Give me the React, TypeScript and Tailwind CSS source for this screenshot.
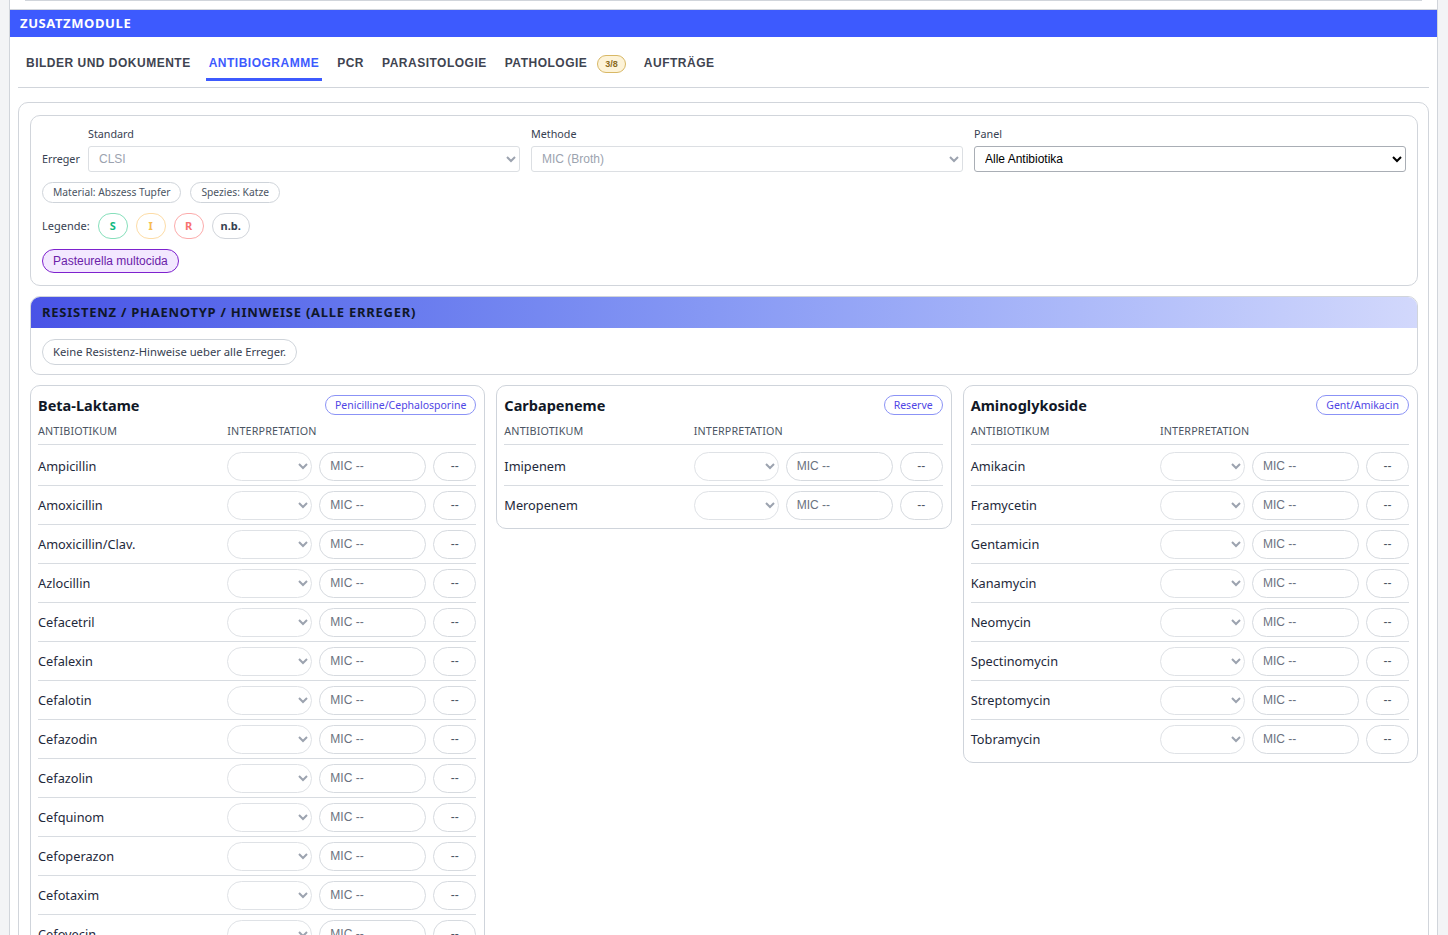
/**
 * Zusatzmodule — Antibiogramme tab.
 *
 *   - Erreger settings (Standard / Methode / Panel), chips and legend
 *   - Resistenz hint panel
 *   - Three antibiotic group cards with interpretation / MIC inputs
 */

import React from "react";

// ── Data ──────────────────────────────────────────────────────────────────────

const TABS: { label: string; active?: boolean; badge?: string }[] = [
  { label: "BILDER UND DOKUMENTE" },
  { label: "ANTIBIOGRAMME", active: true },
  { label: "PCR" },
  { label: "PARASITOLOGIE" },
  { label: "PATHOLOGIE", badge: "3/8" },
  { label: "AUFTRÄGE" },
];

const GROUPS: { title: string; tag: string; items: string[] }[] = [
  {
    title: "Beta-Laktame",
    tag: "Penicilline/Cephalosporine",
    items: [
      "Ampicillin",
      "Amoxicillin",
      "Amoxicillin/Clav.",
      "Azlocillin",
      "Cefacetril",
      "Cefalexin",
      "Cefalotin",
      "Cefazodin",
      "Cefazolin",
      "Cefquinom",
      "Cefoperazon",
      "Cefotaxim",
      "Cefovecin",
      "Cefpodoxim",
      "Ceftiofur",
      "Oxacillin",
      "Penicillin G",
    ],
  },
  { title: "Carbapeneme", tag: "Reserve", items: ["Imipenem", "Meropenem"] },
  {
    title: "Aminoglykoside",
    tag: "Gent/Amikacin",
    items: [
      "Amikacin",
      "Framycetin",
      "Gentamicin",
      "Kanamycin",
      "Neomycin",
      "Spectinomycin",
      "Streptomycin",
      "Tobramycin",
    ],
  },
];

const LEGEND = [
  { label: "S", cls: "w-[30px] border-[#86dfbb] text-[#10b981]" },
  { label: "I", cls: "w-[30px] border-[#fddca6] text-[#f6bd52]" },
  { label: "R", cls: "w-[30px] border-[#fcabab] text-[#f87171]" },
  { label: "n.b.", cls: "w-[38px] border-[#d1d5db] text-[#374151]" },
];

// ── Pieces ────────────────────────────────────────────────────────────────────

function AntibioticRow({ name, last }: { name: string; last: boolean }) {
  return (
    <div
      className={
        last
          ? "flex items-center h-[38px]"
          : "flex items-center h-[39px] border-b border-[#d8dce1]"
      }
    >
      <span className="flex-1 text-[12.75px] text-[#1e293b]">{name}</span>
      <select
        disabled
        className="w-[85px] h-[29px] rounded-full border border-[#dfe2e6] bg-white pl-[8px] pr-[6px] text-[12px] text-[#9ca3af] font-['Liberation_Sans',Arial,sans-serif]"
      >
        <option></option>
      </select>
      <input
        placeholder="MIC --"
        className="ml-[7px] w-[107px] h-[29px] rounded-full border border-[#d6dadf] px-[10px] text-[12px] text-[#374151] placeholder:text-[#6b7280] font-['Liberation_Sans',Arial,sans-serif] outline-none"
      />
      <button className="ml-[7px] w-[43px] h-[29px] rounded-full border border-[#d6dadf] text-[12px] text-[#4b5563] font-['Liberation_Sans',Arial,sans-serif]">
        --
      </button>
    </div>
  );
}

function GroupCard({ title, tag, items }: { title: string; tag: string; items: string[] }) {
  return (
    <div className="self-start rounded-[10px] border border-[#cfd4db] bg-white pl-[7px] pr-[8px] pt-[9px] pb-[4px]">
      <div className="flex items-center justify-between h-[20px]">
        <h3 className="text-[14.5px] font-bold text-[#111827]">{title}</h3>
        <span className="h-[20px] leading-[18px] rounded-full border border-[#8b93f6] px-[9px] text-[10.5px] text-[#4f46e5]">
          {tag}
        </span>
      </div>
      <div className="flex mt-[8px] pb-[5px] border-b border-[#d8dce1] text-[10.75px] leading-[16px] tracking-[0.15px] text-[#4b5563]">
        <span className="flex-1">ANTIBIOTIKUM</span>
        <span className="w-[249px]">INTERPRETATION</span>
      </div>
      <div className="pt-[2px]">
        {items.map((name, i) => (
          <AntibioticRow key={name} name={name} last={i === items.length - 1} />
        ))}
      </div>
    </div>
  );
}

// ── Page ──────────────────────────────────────────────────────────────────────

export default function App(): React.ReactElement {
  return (
    <div className="min-h-screen bg-[#f3f4f6] font-['Noto_Sans','Open_Sans',sans-serif]">
      <div className="ml-[9px] mr-[10px] border-x border-[#d1d5db] bg-white pb-[40px]">
        {/* tail of the previous card */}
        <div className="h-[10px] border-b border-[#d1d5db]">
          <div className="mx-[15px] h-[1px] bg-[#d1d5db]" />
        </div>

        {/* Section header */}
        <div className="h-[27px] bg-[#3d5afe] pl-[10px] flex items-center">
          <h2 className="text-[13px] font-bold tracking-[0.6px] text-white">ZUSATZMODULE</h2>
        </div>

        <div className="px-[8px]">
          {/* Tabs */}
          <div className="flex gap-[12px] pl-[5px] pt-[18px] pb-[6px] border-b border-[#d1d5db] font-['Liberation_Sans',Arial,sans-serif]">
            {TABS.map((tab) => (
              <div
                key={tab.label}
                className={
                  tab.active
                    ? "flex items-center h-[26px] px-[3px] pb-[7px] border-b-[3px] border-[#3d5afe]"
                    : "flex items-center h-[26px] px-[3px] pb-[7px] border-b-[3px] border-transparent"
                }
              >
                <span
                  className={
                    tab.active
                      ? "text-[12px] leading-[16px] font-bold tracking-[0.5px] text-[#3d5afe]"
                      : "text-[12px] leading-[16px] font-bold tracking-[0.5px] text-[#3f4451]"
                  }
                >
                  {tab.label}
                </span>
                {tab.badge && (
                  <span className="ml-[10px] -my-[1px] mt-[1px] h-[18px] px-[7px] rounded-full border border-[#d8b866] bg-[#fdf3d8] text-[9px] leading-[16px] font-bold text-[#8a6a1c]">
                    {tab.badge}
                  </span>
                )}
              </div>
            ))}
          </div>

          {/* Antibiogramm card */}
          <div className="mt-[14px] rounded-[10px] border border-[#d1d5db] pl-[11px] pr-[10px] pt-[12px] flex flex-col gap-[10px]">
            {/* Erreger settings */}
            <div className="rounded-[10px] border border-[#d1d5db] px-[11px] pt-[12px] pb-[12px]">
              <div className="flex items-end gap-[10px]">
                <span className="w-[36px] shrink-0 h-[26px] leading-[26px] text-[10.75px] text-[#374151]">
                  Erreger
                </span>
                <div className="flex-1 grid grid-cols-3 gap-[11px]">
                  <label className="flex flex-col">
                    <span className="text-[10.75px] leading-[12px] text-[#374151] mb-[6px]">Standard</span>
                    <select
                      disabled
                      className="h-[26px] rounded-[3px] border border-[#dcdfe3] bg-white px-[6px] text-[12px] text-[#9ca3af] font-['Liberation_Sans',Arial,sans-serif]"
                    >
                      <option>CLSI</option>
                    </select>
                  </label>
                  <label className="flex flex-col">
                    <span className="text-[10.75px] leading-[12px] text-[#374151] mb-[6px]">Methode</span>
                    <select
                      disabled
                      className="h-[26px] rounded-[3px] border border-[#dcdfe3] bg-white px-[6px] text-[12px] text-[#9ca3af] font-['Liberation_Sans',Arial,sans-serif]"
                    >
                      <option>MIC (Broth)</option>
                    </select>
                  </label>
                  <label className="flex flex-col">
                    <span className="text-[10.75px] leading-[12px] text-[#374151] mb-[6px]">Panel</span>
                    <select className="h-[26px] rounded-[3px] border border-[#a9aeb5] bg-white px-[6px] text-[12px] text-black font-['Liberation_Sans',Arial,sans-serif]">
                      <option>Alle Antibiotika</option>
                    </select>
                  </label>
                </div>
              </div>

              <div className="mt-[10px] flex gap-[9px]">
                <span className="h-[21px] leading-[19px] rounded-full border border-[#cfd4da] px-[10px] text-[10.25px] text-[#4b5563]">
                  Material: Abszess Tupfer
                </span>
                <span className="h-[21px] leading-[19px] rounded-full border border-[#cfd4da] px-[10px] text-[10.25px] text-[#4b5563]">
                  Spezies: Katze
                </span>
              </div>

              <div className="mt-[10px] flex items-center gap-[8px]">
                <span className="text-[11px] text-[#374151]">Legende:</span>
                {LEGEND.map((l) => (
                  <span
                    key={l.label}
                    className={`h-[26px] flex items-center justify-center rounded-full border text-[11px] font-bold ${l.cls}`}
                  >
                    {l.label}
                  </span>
                ))}
              </div>

              <button className="mt-[10px] h-[24px] rounded-full border-[1.5px] border-[#7e22ce] bg-[#f3e8ff] px-[10px] text-[12px] text-[#6b21a8] font-['Liberation_Sans',Arial,sans-serif]">
                Pasteurella multocida
              </button>
            </div>

            {/* Resistenz hints */}
            <div className="rounded-[10px] border border-[#d1d5db] overflow-hidden pb-[9px]">
              <div className="h-[31px] flex items-center px-[11px] bg-linear-to-r from-[#4953e6] to-[#d2d8fc]">
                <h3 className="text-[13px] font-bold tracking-[0.75px] text-[#0f172a]">
                  RESISTENZ / PHAENOTYP / HINWEISE (ALLE ERREGER)
                </h3>
              </div>
              <div className="px-[11px] mt-[10px]">
                <span className="inline-flex items-center h-[26px] rounded-full border border-[#cfd4da] px-[10px] text-[11.25px] text-[#374151]">
                  Keine Resistenz-Hinweise ueber alle Erreger.
                </span>
              </div>
            </div>

            {/* Antibiotic groups */}
            <div className="grid grid-cols-3 gap-[11px] items-start">
              {GROUPS.map((g) => (
                <GroupCard key={g.title} title={g.title} tag={g.tag} items={g.items} />
              ))}
            </div>
          </div>
        </div>
      </div>
    </div>
  );
}
